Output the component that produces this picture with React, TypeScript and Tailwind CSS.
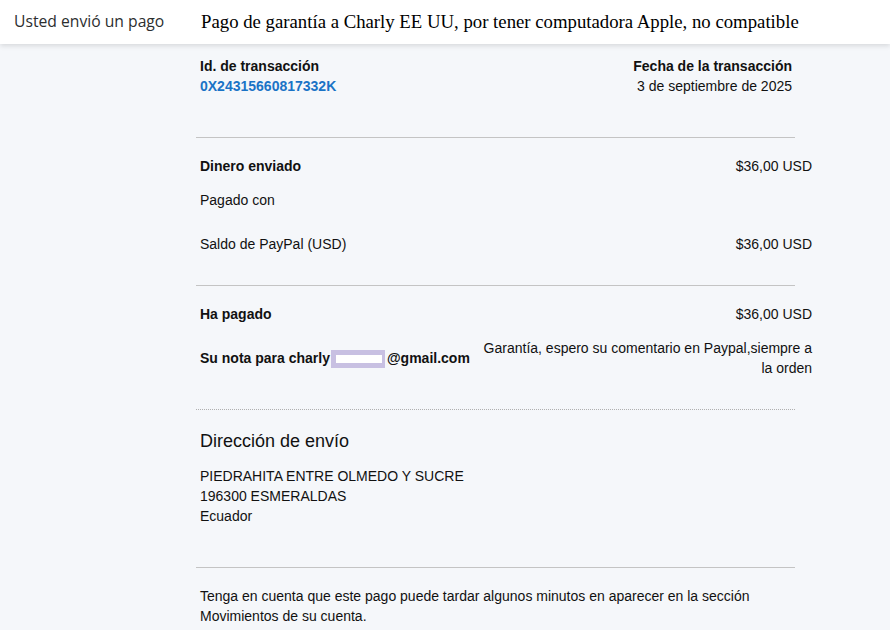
import React from 'react';

function Divider({ dotted = false }: { dotted?: boolean }) {
  return (
    <div
      className={`-ml-1 w-[599px] border-t ${
        dotted ? 'border-dotted border-[#b0b0b0]' : 'border-solid border-[#c4c4c4]'
      }`}
    />
  );
}

function Row({ left, right, bold = false }: { left: string; right?: string; bold?: boolean }) {
  return (
    <div className="flex justify-between leading-5">
      <span className={bold ? 'font-bold' : ''}>{left}</span>
      {right && <span>{right}</span>}
    </div>
  );
}

export default function App() {
  return (
    <div className="min-h-[630px] bg-[#f5f7fa] text-[14px] text-[#111] font-['Liberation_Sans',Arial,sans-serif]">
      {/* cabecera */}
      <header className="relative z-10 flex h-11 items-center bg-white shadow-[0_2px_5px_rgba(0,0,0,0.12)]">
        <div className="w-[201px] pl-[14px] font-['Open_Sans',sans-serif] text-[15.7px] text-[#2c2e2f]">
          Usted envió un pago
        </div>
        <h1 className="font-['Liberation_Serif','Times_New_Roman',serif] text-[18.75px] text-black">
          Pago de garantía a Charly EE UU, por tener computadora Apple, no compatible
        </h1>
      </header>

      <main className="ml-[200px] w-[612px]">
        {/* transacción */}
        <section className="flex justify-between pr-5 pt-3 pb-[41px] leading-5">
          <div>
            <div className="font-bold">Id. de transacción</div>
            <div className="font-bold text-[#1a73c6]">0X24315660817332K</div>
          </div>
          <div className="text-right">
            <div className="font-bold">Fecha de la transacción</div>
            <div>3 de septiembre de 2025</div>
          </div>
        </section>

        <Divider />

        <section className="pt-[18px] pb-[31px]">
          <Row left="Dinero enviado" right="$36,00 USD" bold />
          <div className="mt-[14px]">
            <Row left="Pagado con" />
          </div>
          <div className="mt-6">
            <Row left="Saldo de PayPal (USD)" right="$36,00 USD" />
          </div>
        </section>

        <Divider />

        <section className="pt-[18px] pb-[31px]">
          <Row left="Ha pagado" right="$36,00 USD" bold />
          <div className="mt-[14px] flex items-center justify-between leading-5">
            <span className="flex items-center font-bold">
              Su nota para charly
              <span className="ml-px mr-[2px] mt-[2px] inline-block h-[18px] w-[54px] border-y-[5px] border-l-[5px] border-r-[3px] border-[#c8c0e2] bg-white" />
              @gmail.com
            </span>
            <span className="w-[330px] text-right">
              Garantía, espero su comentario en Paypal,siempre a la orden
            </span>
          </div>
        </section>

        <Divider dotted />

        {/* dirección */}
        <section className="pt-[19px] pb-[41px]">
          <h2 className="text-[18px] leading-6">Dirección de envío</h2>
          <div className="mt-[13px] leading-5">
            <div>PIEDRAHITA ENTRE OLMEDO Y SUCRE</div>
            <div>196300 ESMERALDAS</div>
            <div>Ecuador</div>
          </div>
        </section>

        <Divider />

        <p className="w-[560px] pt-[18px] pb-4 leading-5">
          Tenga en cuenta que este pago puede tardar algunos minutos en aparecer en la sección Movimientos de su cuenta.
        </p>
      </main>
    </div>
  );
}
